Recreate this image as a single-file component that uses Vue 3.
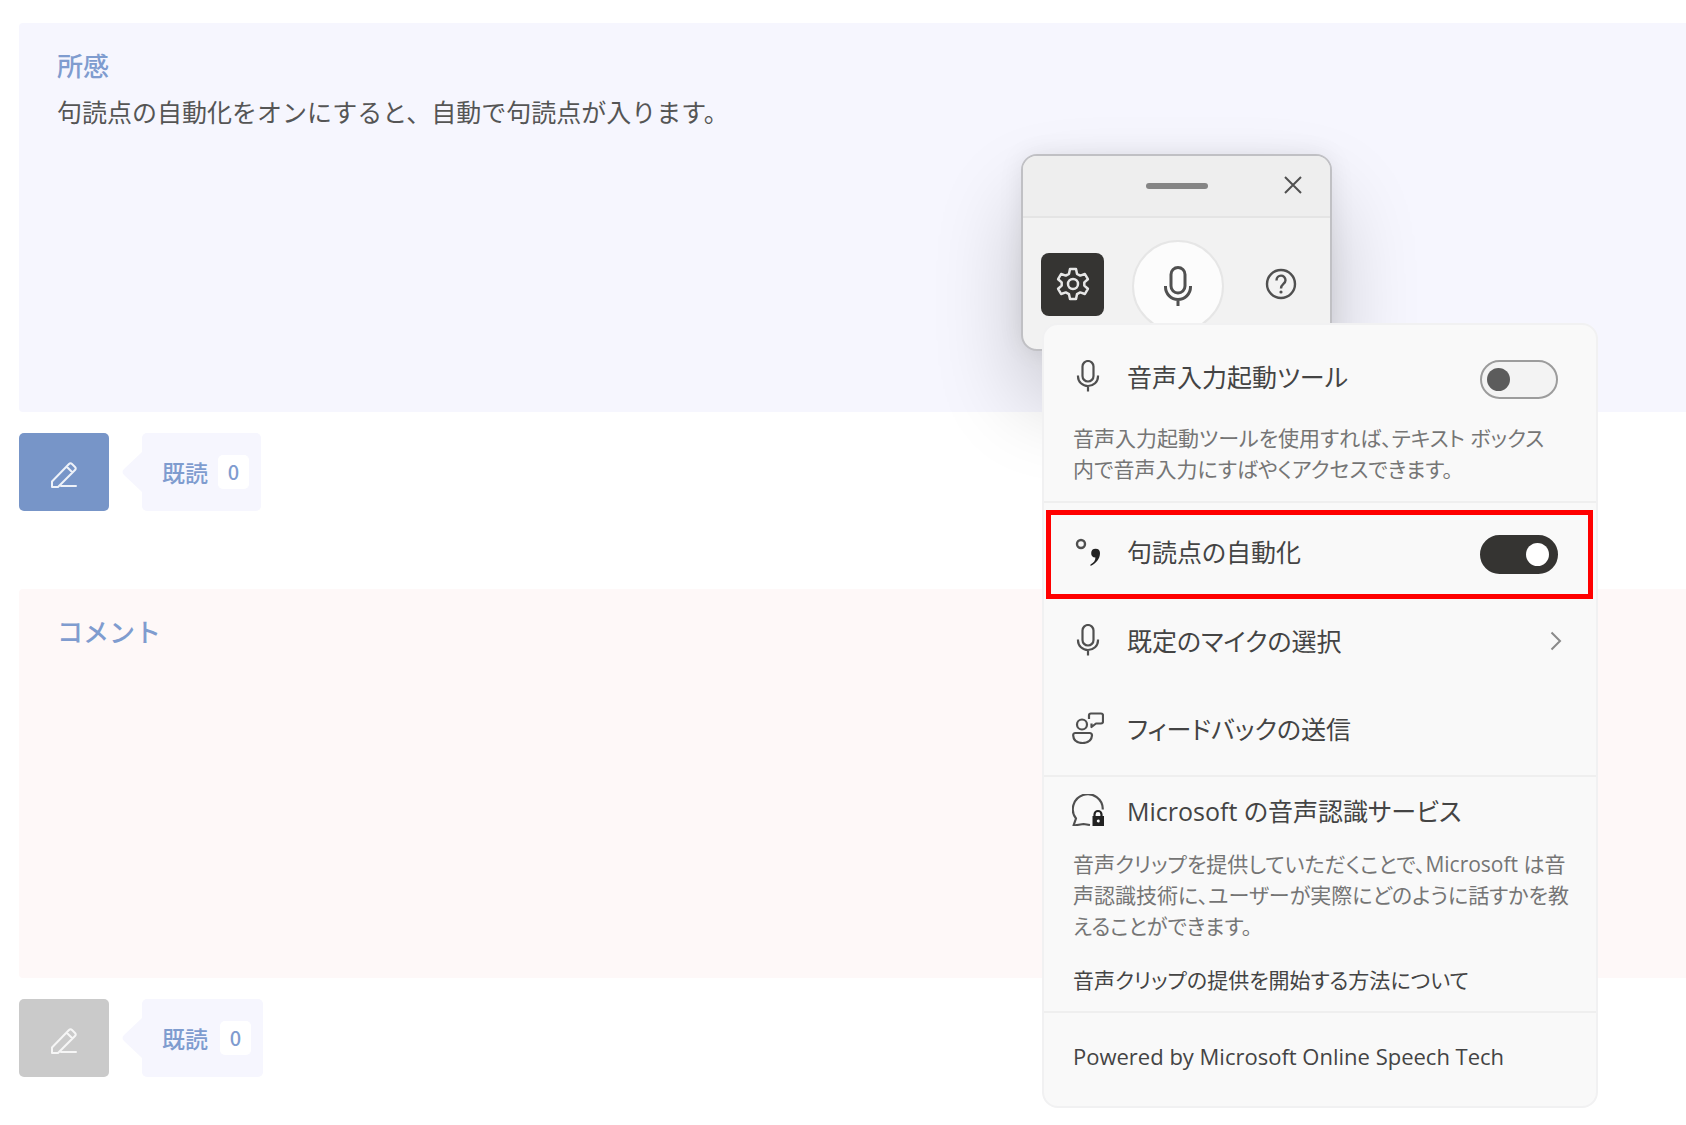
<script setup>
import { ref } from 'vue'

const launcher = ref(false)
const autoPunctuation = ref(true)

const entries = [
  { id: 'impression', title: '所感', body: '句読点の自動化をオンにすると、自動で句読点が入ります。', tone: 'blue', reads: 0 },
  { id: 'comment', title: 'コメント', body: '', tone: 'pink', reads: 0 },
]
</script>

<template>
  <div class="page">
    <main>
      <section v-for="entry in entries" :key="entry.id" class="entry" :class="entry.tone">
        <div class="card">
          <h2>{{ entry.title }}</h2>
          <p>{{ entry.body }}</p>
        </div>
        <div class="actions">
          <button type="button" class="edit" aria-label="編集">
            <svg width="30" height="30" viewBox="0 0 30 30" fill="none" stroke="currentColor" stroke-width="2" stroke-linejoin="round" stroke-linecap="round">
              <path d="M3 27V21.500L20 4Q21.500 2.500 23 4L26 7Q27.500 8.500 26 10L9 27ZM17.500 6.500L23.500 12.500M12 26H27" />
            </svg>
          </button>
          <div class="read">
            <svg class="tail" width="20" height="40" viewBox="0 0 20 40"><path d="M20 0V40L2 23Q-1 20 2 17Z" fill="currentColor" /></svg>
            <span>既読</span>
            <span class="count">{{ entry.reads }}</span>
          </div>
        </div>
      </section>
    </main>

    <div class="voice">
      <header>
        <span class="grip"></span>
        <button type="button" class="close" aria-label="閉じる">
          <svg width="18" height="18" viewBox="0 0 18 18" fill="none" stroke="currentColor" stroke-width="2"><path d="M1 1L17 17M17 1L1 17" /></svg>
        </button>
      </header>
      <div class="controls">
        <button type="button" class="gear" aria-label="設定">
          <svg width="34" height="34" viewBox="0 0 34 34" fill="none" stroke="currentColor" stroke-width="2.500" stroke-linejoin="round">
            <path d="M14 2H20L21 6.800L24.200 8.600L28.900 7L31.900 12.200L28.300 15.400V18.600L31.900 21.800L28.900 27L24.200 25.400L21 27.200L20 32H14L13 27.200L9.800 25.400L5.100 27L2.100 21.800L5.700 18.600V15.400L2.100 12.200L5.100 7L9.800 8.600L13 6.800Z" />
            <circle cx="17" cy="17" r="5" />
          </svg>
        </button>
        <button type="button" class="mic" aria-label="音声入力">
          <svg width="28" height="40" viewBox="0 0 28 40" fill="none" stroke="currentColor" stroke-width="3"><rect x="7" y="1.500" width="14" height="25.500" rx="7" /><path d="M1.500 20V21A12.500 12.500 0 0 0 26.500 21V20M14 33.500V40" /></svg>
        </button>
        <button type="button" class="help" aria-label="ヘルプ">
          <svg width="32" height="32" viewBox="0 0 32 32" fill="none" stroke="currentColor" stroke-width="2.400"><circle cx="16" cy="16" r="14" /><path d="M11.500 12.500C11.500 6 20.500 6 20.500 12.300C20.500 16 16 16 16 20.500" /><circle cx="16" cy="24" r="1.600" fill="currentColor" stroke="none" /></svg>
        </button>
      </div>
    </div>

    <div class="menu">
      <section class="group intro">
        <div class="row">
          <svg class="icon" viewBox="0 0 32 32" fill="none" stroke="currentColor" stroke-width="2.200"><rect x="10.500" y="1" width="11" height="20.500" rx="5.500" /><path d="M6 15.500V16.500A10 9.500 0 0 0 26 16.500V15.500M16 26V31.500" /></svg>
          <label for="launcher">音声入力起動ツール</label>
          <input id="launcher" v-model="launcher" type="checkbox" role="switch" />
        </div>
        <p class="note">音声入力起動ツールを使用すれば、テキスト ボックス<br />内で音声入力にすばやくアクセスできます。</p>
      </section>

      <section class="group">
        <div class="row marked">
          <svg class="icon" viewBox="0 0 32 32"><circle cx="9" cy="8" r="4" fill="none" stroke="currentColor" stroke-width="2.400" /><path d="M18.500 28.500C21.800 26.500 23.500 24.500 23.400 21.500A4.400 4.400 0 1 1 28 17C28 23 24 27.500 18.500 30Z" fill="#222" /></svg>
          <label for="punctuation">句読点の自動化</label>
          <input id="punctuation" v-model="autoPunctuation" type="checkbox" role="switch" />
        </div>
        <button type="button" class="row">
          <svg class="icon" viewBox="0 0 32 32" fill="none" stroke="currentColor" stroke-width="2.200"><rect x="10.500" y="1" width="11" height="20.500" rx="5.500" /><path d="M6 15.500V16.500A10 9.500 0 0 0 26 16.500V15.500M16 26V31.500" /></svg>
          <span>既定のマイクの選択</span>
          <svg class="chevron" width="12" height="20" viewBox="0 0 12 20" fill="none" stroke="currentColor" stroke-width="2"><path d="M1.500 1.500L10 10L1.500 18.500" /></svg>
        </button>
        <button type="button" class="row">
          <svg class="icon" viewBox="0 0 32 32" fill="none" stroke="currentColor" stroke-width="2.200" stroke-linejoin="round"><circle cx="10" cy="12.500" r="5" /><path d="M3.500 21H17.500Q20 21 20 23.500C19.500 29 15.500 31 10.500 31S1.500 29 1.200 23.500Q1 21 3.500 21ZM17 7V3.500Q17 1.500 19 1.500H29Q31 1.500 31 3.500V9.500Q31 11.500 29 11.500H24L19.500 15V11.500" /></svg>
          <span>フィードバックの送信</span>
        </button>
      </section>

      <section class="group service">
        <div class="row">
          <svg class="icon" viewBox="0 0 32 32" fill="none" stroke="currentColor" stroke-width="2.200" stroke-linejoin="round"><path d="M18 31L11.500 30L1.500 31.500L4 24.500A15 15 0 1 1 30.800 15.500" /><path d="M22.500 23V20.500A3.500 3.500 0 0 1 29.500 20.500V23" stroke="#222" /><path d="M20.500 22H32V32H20.500ZM26.200 25.500A1.500 1.500 0 1 0 26.300 28.500A1.500 1.500 0 1 0 26.200 25.500Z" fill="#222" fill-rule="evenodd" stroke="none" /></svg>
          <span>Microsoft の音声認識サービス</span>
        </div>
        <p class="note">音声クリップを提供していただくことで、Microsoft は音<br />声認識技術に、ユーザーが実際にどのように話すかを教<br />えることができます。</p>
        <a href="#">音声クリップの提供を開始する方法について</a>
      </section>

      <footer>Powered by Microsoft Online Speech Tech</footer>
    </div>
  </div>
</template>

<style>
body {
  margin: 0;
  background: #fff;
}
</style>

<style scoped>
.page {
  position: relative;
  overflow: hidden;
  min-height: 100vh;
  box-sizing: border-box;
  padding: 23px 0 0 19px;
  font-family: "Noto Sans CJK JP", sans-serif;
}
button {
  padding: 0;
  border: 0;
  background: none;
  color: inherit;
  font: inherit;
}
svg {
  display: block;
}
main {
  display: flex;
  flex-direction: column;
  gap: 78px;
}
.card {
  min-height: 389px;
  box-sizing: border-box;
  padding: 23px 38px;
  border-radius: 4px 0 0 4px;
  background: #f6f6fe;
}
.pink .card {
  background: #fef8f8;
}
h2 {
  margin: 0;
  font-size: 26px;
  line-height: 38px;
  font-weight: 500;
  color: #7f9ccf;
}
.card p {
  margin: 8px 0 0;
  font-size: 25px;
  line-height: 38px;
  color: #555;
}
.actions {
  display: flex;
  gap: 33px;
  margin-top: 21px;
}
.edit {
  display: flex;
  align-items: center;
  justify-content: center;
  width: 90px;
  height: 78px;
  padding-top: 6px;
  border-radius: 5px;
  background: #7795c8;
  color: #eef2f9;
}
.pink .edit {
  background: #cacaca;
  color: #f6f6f6;
}
.read {
  position: relative;
  display: flex;
  align-items: center;
  gap: 10px;
  padding: 0 12px 0 20px;
  border-radius: 5px;
  background: #f6f6fe;
  color: #7f9ccf;
  font-size: 23px;
  font-weight: 500;
}
.pink .read {
  gap: 12px;
}
.tail {
  position: absolute;
  right: 100%;
  top: 19px;
  color: #f6f6fe;
}
.count {
  width: 31px;
  border-radius: 5px;
  background: #fff;
  font-size: 20px;
  line-height: 34px;
  text-align: center;
}

.voice {
  position: absolute;
  left: 1021px;
  top: 154px;
  width: 311px;
  height: 197px;
  box-sizing: border-box;
  border: 2px solid #c0c0c4;
  border-radius: 16px;
  background: #f2f2f2;
  color: #505050;
  box-shadow: 0 48px 88px rgba(0, 0, 0, 0.2), 0 0 24px rgba(0, 0, 0, 0.08);
}
.voice header {
  position: relative;
  display: flex;
  align-items: center;
  justify-content: center;
  height: 60px;
  border-bottom: 2px solid #e4e4e4;
  border-radius: 14px 14px 0 0;
  background: #eee;
}
.grip {
  width: 62px;
  height: 6px;
  border-radius: 3px;
  background: #858585;
}
.close {
  position: absolute;
  right: 28px;
  top: 20px;
}
.controls {
  display: flex;
  align-items: center;
  padding: 22px 33px 0 18px;
}
.gear {
  display: flex;
  align-items: center;
  justify-content: center;
  width: 63px;
  height: 63px;
  margin-bottom: 4px;
  border-radius: 8px;
  background: #353432;
  color: #e6e6e6;
}
.mic {
  display: flex;
  align-items: center;
  justify-content: center;
  width: 92px;
  height: 92px;
  margin-left: 28px;
  border: 2px solid #e6e6e6;
  border-radius: 50%;
  background: #fcfcfc;
}
.help {
  margin: 0 0 4px auto;
}

.menu {
  position: absolute;
  left: 1042px;
  top: 323px;
  width: 556px;
  box-sizing: border-box;
  border: 2px solid #f1f1f2;
  border-radius: 16px;
  background: #f9f9f9;
  color: #444;
  font-family: "Open Sans", "Noto Sans CJK JP", sans-serif;
  font-feature-settings: "palt";
}
.group {
  padding: 7px 0 0;
  border-bottom: 2px solid #efefef;
}
.intro {
  padding: 10px 0 1px;
}
.row {
  display: flex;
  align-items: center;
  width: calc(100% - 5px);
  height: 88px;
  box-sizing: border-box;
  margin: 0 3px 0 2px;
  padding: 0 30px 0 21px;
  border: 5px solid transparent;
  font-size: 25px;
  line-height: 38px;
  text-align: left;
}
.marked {
  height: 89px;
  border-color: #f00;
}
.icon {
  flex: none;
  width: 32px;
  height: 32px;
  margin: 0 23px 6px 0;
  color: #505050;
}
.row label,
.row span {
  flex: 1;
  padding-bottom: 5px;
  white-space: nowrap;
}
.chevron {
  margin: 0 -4px 4px 0;
  color: #8a8a8a;
}
input {
  appearance: none;
  display: flex;
  align-items: center;
  flex: none;
  width: 78px;
  height: 39px;
  box-sizing: border-box;
  margin: 0;
  padding: 0 5px;
  border: 2px solid #9c9c9c;
  border-radius: 20px;
  background: #f3f3f3;
}
input::before {
  content: "";
  width: 23px;
  height: 23px;
  border-radius: 50%;
  background: #5c5c5c;
}
input:checked {
  justify-content: flex-end;
  padding: 0 7px;
  border-color: #353432;
  background: #353432;
}
input:checked::before {
  background: #fff;
}
.note {
  margin: 0;
  padding: 0 20px 15px 29px;
  font-size: 21px;
  line-height: 31px;
  color: #757575;
  white-space: nowrap;
}
.service {
  padding: 0;
}
.service .row {
  height: 72px;
}
.service a {
  display: block;
  padding: 8px 29px 15px;
  font-size: 21px;
  line-height: 31px;
  color: #444;
  text-decoration: none;
}
footer {
  padding: 27px 29px 33px;
  font-size: 22px;
  line-height: 33px;
}
</style>
